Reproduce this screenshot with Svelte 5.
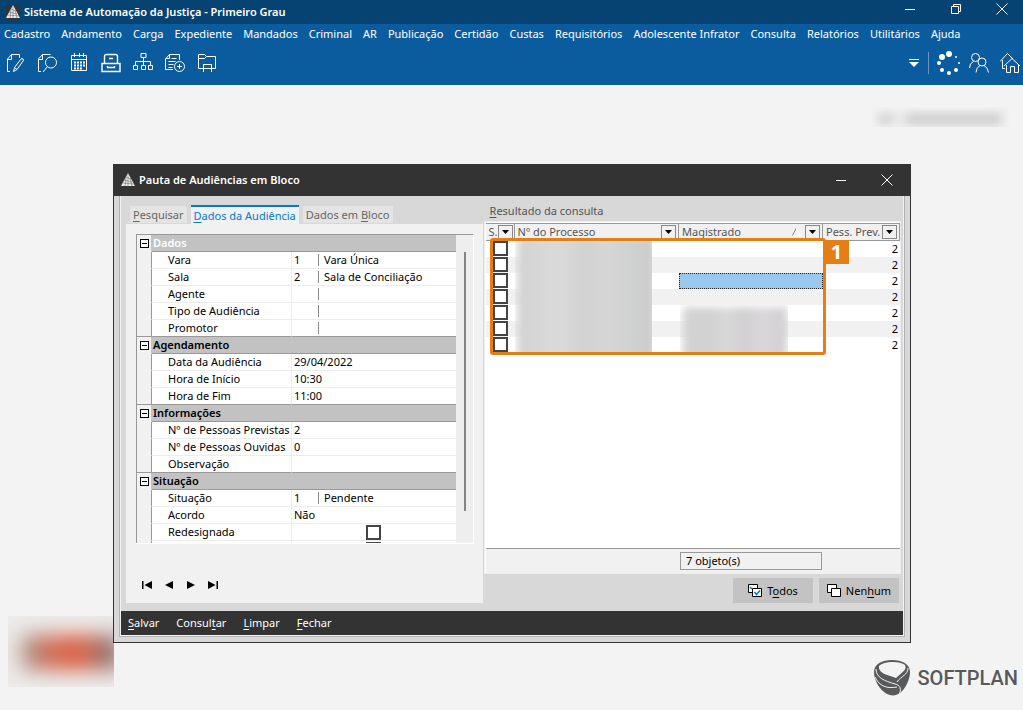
<script lang="ts">
	interface PropertyRow {
		id: string;
		label: string;
		value: string;
		detail?: string;
		lookup?: boolean;
		check?: boolean;
	}

	interface PropertyGroup {
		title: string;
		selected?: boolean;
		rows: PropertyRow[];
	}

	const menus = [
		'Cadastro', 'Andamento', 'Carga', 'Expediente', 'Mandados', 'Criminal', 'AR', 'Publicação',
		'Certidão', 'Custas', 'Requisitórios', 'Adolescente Infrator', 'Consulta', 'Relatórios',
		'Utilitários', 'Ajuda',
	];

	const groups: PropertyGroup[] = [
		{
			title: 'Dados',
			selected: true,
			rows: [
				{ id: 'vara', label: 'Vara', value: '1', detail: 'Vara Única', lookup: true },
				{ id: 'sala', label: 'Sala', value: '2', detail: 'Sala de Conciliação', lookup: true },
				{ id: 'agente', label: 'Agente', value: '', detail: '', lookup: true },
				{ id: 'tipo', label: 'Tipo de Audiência', value: '', detail: '', lookup: true },
				{ id: 'promotor', label: 'Promotor', value: '', detail: '', lookup: true },
			],
		},
		{
			title: 'Agendamento',
			rows: [
				{ id: 'data', label: 'Data da Audiência', value: '29/04/2022' },
				{ id: 'inicio', label: 'Hora de Início', value: '10:30' },
				{ id: 'fim', label: 'Hora de Fim', value: '11:00' },
			],
		},
		{
			title: 'Informações',
			rows: [
				{ id: 'previstas', label: 'Nº de Pessoas Previstas', value: '2' },
				{ id: 'ouvidas', label: 'Nº de Pessoas Ouvidas', value: '0' },
				{ id: 'observacao', label: 'Observação', value: '' },
			],
		},
		{
			title: 'Situação',
			rows: [
				{ id: 'situacao', label: 'Situação', value: '1', detail: 'Pendente', lookup: true },
				{ id: 'acordo', label: 'Acordo', value: 'Não' },
				{ id: 'redesignada', label: 'Redesignada', value: '', check: true },
				{ id: 'extra', label: '', value: '', check: true },
			],
		},
	];

	const dots = [
		[12, 3, 3], [5, 6, 3], [2, 12, 2], [5, 19, 2], [12, 22, 2], [19, 19, 2], [22, 12, 1], [19, 6, 1],
	];

	let results = $state(Array.from({ length: 7 }, () => ({ checked: false, people: 2 })));
	let activeRow = $state(2);
	let collapsed = $state<Record<string, boolean>>({});

	function toggleGroup(title: string) {
		collapsed[title] = !collapsed[title];
	}

	function setAll(checked: boolean) {
		results.forEach((row) => (row.checked = checked));
	}
</script>

{#snippet logo()}
	<svg class="logo" viewBox="0 0 14 14" aria-hidden="true">
		<path d="M7 0 0 13h14z" fill="#eee" />
		<path d="M5 4l5 2M3 7l8 2M2 10l11 1M7 1v12M5 5l-1 8M9 5l2 8" stroke="#555" stroke-width=".5" />
	</svg>
{/snippet}

{#snippet filter(label: string)}
	<button class="filter" aria-label={label}>
		<svg width="7" height="4" viewBox="0 0 7 4"><path d="M0 0h7L3.500 4z" fill="#000" /></svg>
	</button>
{/snippet}

<div class="app">
	<header>
		<div class="app-title">
			{@render logo()}
			<h1>Sistema de Automação da Justiça - Primeiro Grau</h1>
			<div class="window-buttons">
				<button aria-label="Minimizar"><svg width="12" height="12" viewBox="0 0 12 12"><path d="M1 6.500h10" /></svg></button>
				<button aria-label="Restaurar"><svg width="12" height="12" viewBox="0 0 12 12"><path d="M1.500 3.500h7v7h-7zM3.500 3V1.500h7v7H9" /></svg></button>
				<button aria-label="Fechar janela"><svg width="12" height="12" viewBox="0 0 12 12"><path d="M.5.5l11 11M11.500.5l-11 11" /></svg></button>
			</div>
		</div>
		<nav>
			{#each menus as menu}
				<a href="#menu">{menu}</a>
			{/each}
		</nav>
		<div class="toolbar">
			<button aria-label="Editar">
				<svg viewBox="0 0 20 20"><path d="M5 18.500H2.500V6L6.500 1.500h8V5M2.500 6.500h4v-5M8.500 18.500l1-4 6.500-8.500q1-1 2 0t0 2L12 16.500zM9.500 14.500l2.500 2" /></svg>
			</button>
			<button aria-label="Pesquisar documento">
				<svg viewBox="0 0 20 20"><path d="M4 18.500H1.500V6L5.500 1.500h8M1.500 6.500h4v-5" /><circle cx="14" cy="9.500" r="5.500" /><path d="M10 14l-4 5" /></svg>
			</button>
			<button aria-label="Agenda">
				<svg viewBox="0 0 20 20"><path d="M2.500 2.500h15v15h-15zM2.500 6.500h15" /><path d="M5.500 0v4M10.500 0v4M14.500 0v4" /><path d="M5 9.500h11M5 12.500h11M5 15.500h8" stroke-dasharray="2 1" stroke-width="2" /></svg>
			</button>
			<button aria-label="Arquivo">
				<svg viewBox="0 0 20 20"><path d="M3.500 10V3.500q0-2 2-2h9q2 0 2 2V10M1 10.500h18v8H1zM8 5.500h4M6.500 13v1.500h7V13" stroke-width="1.400" /></svg>
			</button>
			<button aria-label="Fluxo">
				<svg viewBox="0 0 20 20"><path d="M8 .5h5v4H8zM10.500 4.500v8M2.500 12V8.500h15V12M.5 12.500h4v4h-4zM8.500 12.500h4v4h-4zM15.500 12.500h4v4h-4z" /></svg>
			</button>
			<button aria-label="Novo documento">
				<svg viewBox="0 0 20 20"><path d="M8 16.500H.5V6L4.500 1.500h10V7M.5 5.500h4v-4M6.500 5.500h5M3.500 8.500h7M3.500 11.500h5M3.500 14.500h4" /><circle cx="14.500" cy="13.500" r="5" /><path d="M14.500 11v5M12 13.500h5" /></svg>
			</button>
			<button aria-label="Pasta">
				<svg viewBox="0 0 20 20"><path d="M6 15.500H1.500v-14h6l2 2h9v12H15M1.500 5.500h6l2-2M6.500 19v-7.500h8V19M6.500 15.500h8" /></svg>
			</button>
			<div class="toolbar-end">
				<button class="more" aria-label="Mais opções">
					<svg viewBox="0 0 12 12"><path d="M1 2.500h10" /><path d="M1 5h10L6 10z" fill="#fff" stroke="none" /></svg>
				</button>
				<button class="busy" aria-label="Processando">
					<svg viewBox="0 0 24 24">
						{#each dots as [cx, cy, r]}
							<circle {cx} {cy} {r} fill="#fff" stroke="none" />
						{/each}
					</svg>
				</button>
				<button aria-label="Usuários">
					<svg viewBox="0 0 20 20"><circle cx="6.500" cy="4.500" r="4" /><path d="M.5 15q0-5 4-6.500" /><circle cx="13" cy="9" r="4" /><path d="M7 19.500q0-5 4-7M15 12.500q4 2 4.500 7" /></svg>
				</button>
				<button aria-label="Início">
					<svg viewBox="0 0 20 20"><path d="M0 8.500L7.500.5 13 6M2.500 7v8.500H5M4 13l8-7.500 8 7.500M6.500 12v7.500h4v-6h4v6h4V12" /></svg>
				</button>
			</div>
		</div>
	</header>

	<main>
		<div class="smudge user" aria-hidden="true"><i></i></div>
		<div class="smudge stamp" aria-hidden="true"><i></i></div>

		<section class="dialog" aria-label="Pauta de Audiências em Bloco">
			<div class="dialog-title">
				{@render logo()}
				<h2>Pauta de Audiências em Bloco</h2>
				<div class="window-buttons">
					<button aria-label="Minimizar diálogo"><svg width="12" height="12" viewBox="0 0 12 12"><path d="M1 6.500h10" /></svg></button>
					<button aria-label="Fechar diálogo"><svg width="12" height="12" viewBox="0 0 12 12"><path d="M.5.5l11 11M11.500.5l-11 11" /></svg></button>
				</div>
			</div>

			<div class="dialog-frame">
				<div class="dialog-body">
					<div class="left">
						<div class="tabs">
							<button><u>P</u>esquisar</button>
							<button class="active"><u>D</u>ados da Audiência</button>
							<button>Dados em <u>B</u>loco</button>
						</div>
						<div class="tab-page">
							<div class="property-box">
								<div class="property-clip">
									<table class="properties">
										<colgroup>
											<col class="col-gutter" />
											<col class="col-label" />
											<col />
										</colgroup>
										{#each groups as group}
											<tbody>
												<tr class="category">
													<td class="gutter">
														<button aria-label="Recolher {group.title}" onclick={() => toggleGroup(group.title)}></button>
													</td>
													<th colspan="2" class:selected={group.selected}>{group.title}</th>
												</tr>
												{#if !collapsed[group.title]}
													{#each group.rows as row}
														<tr>
															<td class="gutter"></td>
															<td class="name"><label for={row.id}>{row.label}</label></td>
															<td class="value">
																{#if row.check}
																	<input type="checkbox" class="box" id={row.id} aria-label={row.label || 'Outra opção'} />
																{:else}
																	<div class="field">
																		<input type="text" class:code={row.lookup} id={row.id} value={row.value} />
																		{#if row.lookup}
																			<span>{row.detail}</span>
																		{/if}
																	</div>
																{/if}
															</td>
														</tr>
													{/each}
												{/if}
											</tbody>
										{/each}
									</table>
								</div>
								<div class="scrollbar"></div>
							</div>
							<div class="pager">
								<button aria-label="Primeiro"><svg viewBox="0 0 10 8"><path d="M0 0h1.500v8H0zM10 0v8L2.500 4z" /></svg></button>
								<button aria-label="Anterior"><svg viewBox="0 0 10 8"><path d="M9 0v8L1 4z" /></svg></button>
								<button aria-label="Próximo"><svg viewBox="0 0 10 8"><path d="M1 0v8l8-4z" /></svg></button>
								<button aria-label="Último"><svg viewBox="0 0 10 8"><path d="M8.500 0H10v8H8.500zM0 0v8l7.500-4z" /></svg></button>
							</div>
						</div>
					</div>

					<div class="right">
						<h3><u>R</u>esultado da consulta</h3>
						<div class="grid-box">
							<div class="grid-area">
								<table class="results">
									<colgroup>
										<col class="col-select" />
										<col />
										<col class="col-judge" />
										<col class="col-people" />
									</colgroup>
									<thead>
										<tr>
											<th><div>S.{@render filter('Filtrar seleção')}</div></th>
											<th><div>Nº do Processo{@render filter('Filtrar processo')}</div></th>
											<th>
												<div>
													Magistrado
													<svg class="sort" viewBox="0 0 9 8"><path d="M.5 7.500L4 .5" stroke="#888" /><path d="M4.500.5l4 7H1" stroke="#fff" /></svg>
													{@render filter('Filtrar magistrado')}
												</div>
											</th>
											<th><div>Pess. Prev.{@render filter('Filtrar pessoas previstas')}</div></th>
										</tr>
									</thead>
									<tbody>
										{#each results as row, i}
											<tr onclick={() => (activeRow = i)}>
												<td><input type="checkbox" class="box" bind:checked={row.checked} aria-label="Selecionar linha {i + 1}" /></td>
												<td></td>
												<td class:current={activeRow === i}></td>
												<td class="number">{row.people}</td>
											</tr>
										{/each}
									</tbody>
								</table>
								<div class="highlight">
									<div class="hidden-process"><i></i></div>
									<div class="hidden-judge"><i></i></div>
									<b>1</b>
								</div>
							</div>
							<div class="grid-footer"><span>7 objeto(s)</span></div>
						</div>
						<div class="select-buttons">
							<button onclick={() => setAll(true)}>
								<svg viewBox="0 0 14 13"><path d="M.5.5h9v8h-9z" /><path d="M2 3l2 2" class="tick" /><path d="M4.500 4.500h9v8h-9z" /><path d="M6.500 8l2 2.500L12 6.500" class="tick" /></svg>
								<span>T<u>o</u>dos</span>
							</button>
							<button onclick={() => setAll(false)}>
								<svg viewBox="0 0 14 13"><path d="M.5.5h9v8h-9z" /><path d="M4.500 4.500h9v8h-9z" /></svg>
								<span>Nen<u>h</u>um</span>
							</button>
						</div>
					</div>
				</div>

				<div class="actions">
					<button><u>S</u>alvar</button>
					<button>Consul<u>t</u>ar</button>
					<button><u>L</u>impar</button>
					<button><u>F</u>echar</button>
				</div>
			</div>
		</section>

		<footer>
			<svg viewBox="0 0 36 36" aria-hidden="true">
				<path d="M18 0C8 0 0 4 0 12c0 9 6 18 13 22 4 2 9 2 13-1 5-4 10-13 10-21C36 4 28 0 18 0z" fill="#58595b" />
				<path d="M5 6c5-5 21-5 26-1 2 4-1 6-9 13C15 15 4 14 5 6z" fill="#f3f3f3" />
				<path d="M2 9c0 9 9 12 19 15 5 1 7 5 4 11M1 17c4 9 12 12 22 10M34 8c0 7-7 8-11 14" fill="none" stroke="#f3f3f3" stroke-width="1" />
			</svg>
			<span>SOFTPLAN</span>
		</footer>
	</main>
</div>

<style>
	:global(body) {
		background: #f3f3f3;
	}

	.app {
		display: flex;
		flex-direction: column;
		min-height: 100vh;
		font-family: 'Segoe UI', 'Noto Sans', 'Open Sans', sans-serif;
		font-size: 11px;
		line-height: 16px;
		color: #000;
	}

	h1, h2, h3 {
		margin: 0;
		font-size: 11px;
		font-weight: 600;
	}

	button {
		padding: 0;
		border: 0;
		background: none;
		color: inherit;
		font: inherit;
		cursor: pointer;
	}

	svg {
		display: block;
		fill: none;
	}

	u {
		text-underline-offset: 2px;
	}

	header {
		display: flex;
		flex-direction: column;
		height: 85px;
		background: #0b5c9e;
		color: #fff;
	}

	.app-title {
		display: flex;
		align-items: center;
		gap: 4px;
		height: 24px;
		padding: 0 15px 0 6px;
		background: #064372;
	}

	.app-title .logo {
		background: #333;
	}

	.logo {
		width: 14px;
		height: 14px;
	}

	.window-buttons {
		display: flex;
		gap: 34px;
		margin-left: auto;
	}

	.app-title .window-buttons {
		align-self: flex-start;
		padding-top: 3px;
	}

	.window-buttons svg,
	.toolbar svg {
		stroke: #fff;
	}

	nav {
		display: flex;
		gap: 11px;
		height: 20px;
		padding-left: 4px;
		align-items: center;
		white-space: nowrap;
	}

	nav a {
		color: #fff;
		text-decoration: none;
	}

	.toolbar {
		display: flex;
		align-items: center;
		gap: 12px;
		padding: 7px 3px 0 5px;
	}

	.toolbar svg {
		width: 20px;
		height: 20px;
	}

	.toolbar-end {
		display: flex;
		align-items: center;
		gap: 11px;
		margin-left: auto;
	}

	.toolbar-end .more {
		padding: 5px 8px 5px 0;
		border-right: 1px solid #6b96bd;
	}

	.toolbar-end .more svg {
		width: 12px;
		height: 12px;
	}

	.toolbar-end .busy {
		margin: 0 -3px;
	}

	.toolbar-end .busy svg {
		width: 24px;
		height: 24px;
		overflow: visible;
	}

	main {
		position: relative;
		display: flex;
		flex: 1;
		flex-direction: column;
		padding-top: 79px;
	}

	.smudge {
		position: absolute;
		overflow: hidden;
	}

	.smudge i {
		display: block;
	}

	.user {
		top: 22px;
		right: 11px;
		width: 140px;
		height: 20px;
	}

	.user i {
		height: 12px;
		margin: 6px 10px 0 6px;
		background: linear-gradient(90deg, #d4d4d4 12%, #eee 14% 18%, #cecece 26%);
		filter: blur(5px);
	}

	.stamp {
		bottom: 23px;
		left: 8px;
		width: 106px;
		height: 71px;
		background: linear-gradient(#ececec, #eee6df 50%, #ececec);
	}

	.stamp i {
		height: 35px;
		margin: 19px -6px 0 14px;
		background: linear-gradient(90deg, #a29a9a, #c9755f 24%, #df5f43 50%, #d1674f 65%, #85777c 95%);
		filter: blur(10px);
	}

	.dialog {
		position: relative;
		display: flex;
		flex: 1;
		flex-direction: column;
		margin: 0 112px 0 113px;
		border: 1px solid #333;
		border-top: 0;
		background: #d8d8d8;
	}

	.dialog-title {
		display: flex;
		align-items: center;
		gap: 4px;
		height: 32px;
		padding: 0 17px 0 7px;
		background: #333;
		color: #fff;
	}

	.dialog-frame {
		display: flex;
		flex: 1;
		flex-direction: column;
		margin: 0 5px 5px;
		border: 1px solid #b2b2b2;
		border-top: 0;
		box-shadow: inset 1px 0 #f3f3f3, inset -1px -1px #f3f3f3;
		padding: 0 1px 1px;
	}

	.dialog-body {
		display: flex;
		flex: 1;
		padding: 9px 2px 8px 5px;
	}

	.left {
		display: flex;
		flex: 357;
		flex-direction: column;
		min-width: 0;
	}

	.tabs {
		display: flex;
		align-items: flex-end;
		gap: 4px;
		padding-left: 4px;
		height: 19px;
	}

	.tabs button {
		height: 17px;
		margin-bottom: 1px;
		padding: 0 3px;
		background: #e4e4e3;
		color: #666;
		white-space: nowrap;
	}

	.tabs .active {
		height: 19px;
		margin: 0;
		border-top: 2px solid #0078d7;
		background: #f1f1f1;
		color: #0078d7;
		line-height: 14px;
	}

	.tab-page {
		display: flex;
		flex: 1;
		flex-direction: column;
		padding: 10px 9px 4px 10px;
		background: #f1f1f1;
	}

	.property-box {
		display: flex;
		border-top: 1px solid #999;
		border-right: 1px solid #fff;
		border-bottom: 1px solid #fff;
	}

	.property-clip {
		flex: 1;
		height: 308px;
		overflow: hidden;
		border-left: 1px solid #999;
		background: #fff;
	}

	table {
		width: 100%;
		border-collapse: separate;
		border-spacing: 0;
		table-layout: fixed;
	}

	td, th {
		padding: 0;
		text-align: left;
	}

	.col-gutter {
		width: 15px;
	}

	.col-label {
		width: 140px;
	}

	.properties tr {
		height: 17px;
	}

	.properties td,
	.properties th {
		box-sizing: border-box;
		height: 17px;
		border-bottom: 1px solid #ececec;
		line-height: 16px;
	}

	.properties .gutter {
		border-right: 1px solid #999;
		border-bottom-color: #f1f1f1;
		background: #f1f1f1;
	}

	.properties .category th {
		padding-left: 1px;
		border-bottom-color: #999;
		background: #c2c2c2;
		font-weight: 600;
	}

	.properties .category .gutter {
		border-right-color: #c2c2c2;
	}

	.properties .category .selected {
		color: #fff;
	}

	.properties tbody tr:last-child td {
		border-bottom-color: #999;
	}

	.gutter button {
		display: block;
		width: 9px;
		height: 9px;
		margin-left: 3px;
		border: 1px solid #000;
		background: linear-gradient(#000, #000) center / 5px 1px no-repeat #fff;
	}

	.properties .name {
		padding-left: 16px;
		border-right: 1px solid #ececec;
		white-space: nowrap;
	}

	.field {
		display: flex;
		align-items: center;
		height: 16px;
		padding-left: 2px;
	}

	.field input {
		width: 100%;
		height: 16px;
		padding: 0;
		border: 0;
		background: none;
		font: inherit;
		outline: none;
	}

	.field .code {
		width: 24px;
	}

	.field span {
		height: 12px;
		padding-left: 5px;
		border-left: 1px solid #888;
		line-height: 12px;
		white-space: nowrap;
	}

	.box {
		display: block;
		box-sizing: border-box;
		width: 15px;
		height: 15px;
		margin: 0;
		border: 2px solid #444;
		background: #fff;
		appearance: none;
	}

	.box:checked {
		background: #0078d7;
	}

	.value .box {
		margin: 0 auto;
	}

	.scrollbar {
		width: 17px;
		background: linear-gradient(#858585, #858585) 8px 17px / 2px 259px no-repeat #eee;
	}

	.pager {
		display: flex;
		gap: 12px;
		padding: 37px 0 0 6px;
	}

	.pager svg {
		width: 10px;
		height: 8px;
		fill: #000;
	}

	.right {
		display: flex;
		flex: 418;
		flex-direction: column;
		min-width: 0;
		padding-left: 1px;
	}

	h3 {
		height: 16px;
		padding-left: 6px;
		font-weight: 400;
		line-height: 12px;
		color: #555;
	}

	.grid-box {
		display: flex;
		flex: 1;
		flex-direction: column;
		border: 1px solid #eee;
		background: #fff;
		padding: 1px 0 0 1px;
	}

	.grid-area {
		position: relative;
		flex: 1;
	}

	.col-select {
		width: 29px;
	}

	.col-judge {
		width: 144px;
	}

	.col-people {
		width: 77px;
	}

	.results th {
		box-sizing: border-box;
		height: 18px;
		border-top: 1px solid #999;
		border-right: 1px solid #999;
		border-bottom: 1px solid #999;
		background: #f1f1f1;
		color: #555;
		font-weight: 400;
	}

	.results th div {
		display: flex;
		align-items: center;
		height: 16px;
		padding: 0 2px 0 3px;
		white-space: nowrap;
	}

	.filter {
		display: flex;
		align-items: center;
		justify-content: center;
		box-sizing: border-box;
		width: 15px;
		height: 14px;
		flex-shrink: 0;
		margin-left: auto;
		border: 1px solid #888;
	}

	.sort {
		width: 9px;
		height: 8px;
		margin-right: 4px;
		margin-left: auto;
	}

	.sort + :global(.filter) {
		margin-left: 0;
	}

	.results td {
		height: 16px;
		line-height: 16px;
	}

	.results td .box {
		margin: 0 0 1px 7px;
	}

	.results tbody tr:nth-child(even) {
		background: #f1f1f1;
	}

	.results .current {
		background: #99c9ef;
		outline: 1px dotted #222;
		outline-offset: -1px;
	}

	.results .number {
		padding-right: 2px;
		text-align: right;
	}

	.highlight {
		position: absolute;
		top: 15px;
		right: 74px;
		left: 4px;
		box-sizing: border-box;
		height: 117px;
		border: 3px solid #e67e17;
		border-radius: 3px;
		pointer-events: none;
	}

	.highlight div {
		position: absolute;
		overflow: hidden;
	}

	.highlight i {
		display: block;
		height: 100%;
		filter: blur(4px);
	}

	.hidden-process {
		top: 0;
		right: 171px;
		bottom: 0;
		left: 22px;
	}

	.hidden-process i {
		height: 120%;
		margin: -6px -4px 0 2px;
		background: linear-gradient(90deg, #d3d3d3, #dadada 30%, #d0d1d0 50%, #d6d6d6 62%, #cacccb);
	}

	.hidden-judge {
		right: 35px;
		bottom: 0;
		width: 108px;
		height: 47px;
	}

	.hidden-judge i {
		height: 120%;
		margin: 2px 1px 0 3px;
		background: linear-gradient(90deg, #d2d2d2 30%, #dadada 42%, #d0ced0 60%, #dad8da 75%, #d0ced0);
	}

	.highlight b {
		position: absolute;
		top: -1px;
		right: -26px;
		width: 25px;
		height: 24px;
		background: #e67e17;
		color: #fff;
		font-size: 20px;
		line-height: 24px;
		text-align: center;
	}

	.grid-footer {
		display: flex;
		justify-content: flex-end;
		height: 18px;
		padding: 3px 78px 3px 0;
		border-top: 1px solid #999;
		background: #f1f1f1;
	}

	.grid-footer span {
		box-sizing: border-box;
		width: 142px;
		padding-left: 5px;
		border: 1px solid #999;
	}

	.select-buttons {
		display: flex;
		justify-content: flex-end;
		gap: 6px;
		padding: 4px 2px 0 0;
	}

	.select-buttons button {
		display: flex;
		align-items: center;
		justify-content: center;
		gap: 5px;
		width: 80px;
		height: 25px;
		background: #c3c3c3;
	}

	.select-buttons svg {
		width: 14px;
		height: 13px;
		fill: #fff;
		stroke: #000;
	}

	.select-buttons .tick {
		fill: none;
		stroke: #0078d7;
		stroke-width: 1.5;
	}

	.actions {
		display: flex;
		gap: 17px;
		height: 24px;
		padding-left: 7px;
		background: #333;
		color: #fff;
	}

	footer {
		display: flex;
		flex-shrink: 0;
		align-items: center;
		justify-content: flex-end;
		gap: 8px;
		height: 36px;
		padding: 17px 5px 14px;
		color: #58595b;
		font-family: Roboto, sans-serif;
		font-size: 20px;
		font-weight: 500;
	}

	footer svg {
		width: 36px;
		height: 36px;
	}
</style>
